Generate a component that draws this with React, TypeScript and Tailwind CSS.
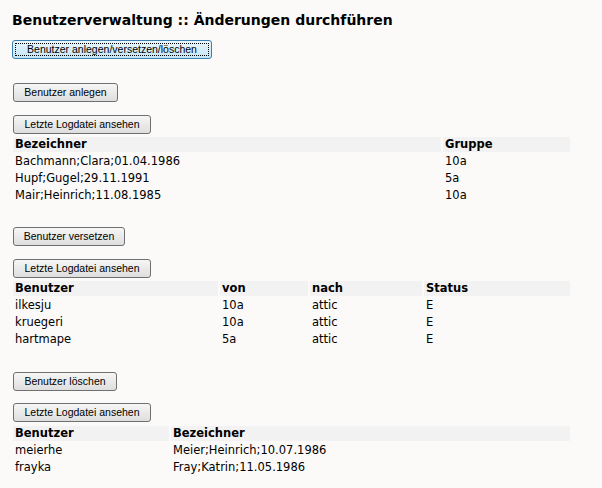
import type { ReactNode } from "react";

const body = { fontFamily: '"DejaVu Sans", Verdana, sans-serif' };
const ui = { fontFamily: '"Liberation Sans", Tahoma, Arial, sans-serif' };

function Btn({
  children,
  w,
  focused = false,
}: {
  children: ReactNode;
  w: string;
  focused?: boolean;
}) {
  if (focused) {
    return (
      <button
        style={ui}
        className={`${w} flex h-[19px] items-center justify-center rounded-[3px] border border-[#3c7fb1] bg-gradient-to-b from-[#eaf6fd] to-[#c4e5f6] p-[2px] text-[10.5px] text-black`}
      >
        <span className="flex h-full w-full items-center justify-center border border-dotted border-black leading-none">
          {children}
        </span>
      </button>
    );
  }
  return (
    <button
      style={ui}
      className={`${w} flex h-[19px] items-center justify-center rounded-[3px] border border-[#707070] bg-gradient-to-b from-[#f6f6f6] to-[#dedede] text-[10.5px] leading-none text-black`}
    >
      {children}
    </button>
  );
}

function Table({
  cols,
  head,
  rows,
  mt,
}: {
  cols: string[];
  head: string[];
  rows: string[][];
  mt: string;
}) {
  return (
    <table
      style={body}
      className={`${mt} -ml-[2px] w-[561px] table-fixed border-separate border-spacing-[2px] text-[11.5px] text-black`}
    >
      <colgroup>
        {cols.map((c, i) => (
          <col key={i} className={c} />
        ))}
      </colgroup>
      <thead>
        <tr>
          {head.map((h) => (
            <th
              key={h}
              className="h-[15px] bg-[#f2f2f2] p-0 pl-[2px] text-left font-bold leading-[15px]"
            >
              {h}
            </th>
          ))}
        </tr>
      </thead>
      <tbody>
        {rows.map((r, i) => (
          <tr key={i}>
            {r.map((c, j) => (
              <td key={j} className="h-[15px] p-0 pl-[2px] leading-[15px]">
                {c}
              </td>
            ))}
          </tr>
        ))}
      </tbody>
    </table>
  );
}

export default function App() {
  return (
    <div className="min-h-[488px] bg-[#fbfaf9] pl-[13px] pt-[11px]">
      <h1
        style={body}
        className="-ml-[1px] text-[14px] font-bold leading-[18px] text-black"
      >
        Benutzerverwaltung :: Änderungen durchführen
      </h1>
      <div className="-ml-[1px] mt-[11px]">
        <Btn w="w-[200px]" focused>
          Benutzer anlegen/versetzen/löschen
        </Btn>
      </div>

      {/* anlegen */}
      <div className="mt-[24px]">
        <Btn w="w-[105px]">Benutzer anlegen</Btn>
      </div>
      <div className="mt-[13px]">
        <Btn w="w-[138px]">Letzte Logdatei ansehen</Btn>
      </div>
      <Table
        mt="mt-[1px]"
        cols={["w-[428px]", "w-[127px]"]}
        head={["Bezeichner", "Gruppe"]}
        rows={[
          ["Bachmann;Clara;01.04.1986", "10a"],
          ["Hupf;Gugel;29.11.1991", "5a"],
          ["Mair;Heinrich;11.08.1985", "10a"],
        ]}
      />

      {/* versetzen */}
      <div className="mt-[22px]">
        <Btn w="w-[112px]">Benutzer versetzen</Btn>
      </div>
      <div className="mt-[13px]">
        <Btn w="w-[138px]">Letzte Logdatei ansehen</Btn>
      </div>
      <Table
        mt="mt-[1px]"
        cols={["w-[205px]", "w-[88px]", "w-[112px]", "w-[146px]"]}
        head={["Benutzer", "von", "nach", "Status"]}
        rows={[
          ["ilkesju", "10a", "attic", "E"],
          ["kruegeri", "10a", "attic", "E"],
          ["hartmape", "5a", "attic", "E"],
        ]}
      />

      {/* löschen */}
      <div className="mt-[23px]">
        <Btn w="w-[104px]">Benutzer löschen</Btn>
      </div>
      <div className="mt-[12px]">
        <Btn w="w-[138px]">Letzte Logdatei ansehen</Btn>
      </div>
      <Table
        mt="mt-[2px]"
        cols={["w-[156px]", "w-[399px]"]}
        head={["Benutzer", "Bezeichner"]}
        rows={[
          ["meierhe", "Meier;Heinrich;10.07.1986"],
          ["frayka", "Fray;Katrin;11.05.1986"],
        ]}
      />
    </div>
  );
}
